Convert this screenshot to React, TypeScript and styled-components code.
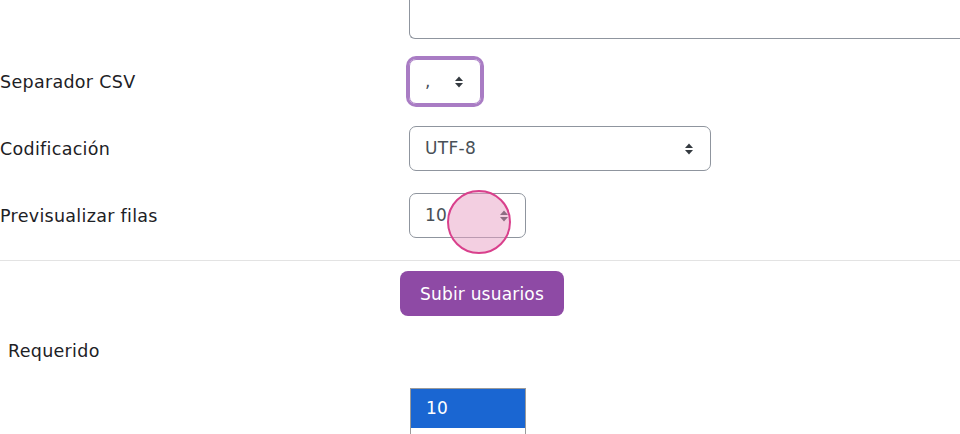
import styled, { createGlobalStyle } from "styled-components";

const GlobalStyle = createGlobalStyle`
  html, body {
    margin: 0;
    padding: 0;
    background: #ffffff;
    overflow: hidden;
  }
  body {
    font-family: "DejaVu Sans", "Liberation Sans", sans-serif;
    color: #1d2125;
    letter-spacing: 0.3px;
    line-height: 1.5;
  }
`;

const Page = styled.div`
  width: 960px;
  height: 434px;
  overflow: hidden;
  position: relative;
`;

const TopArea = styled.div`
  margin-left: 409px;
  margin-top: -40px;
  height: 79px;
  border: 1px solid #8f959e;
  border-right: none;
  border-radius: 6px 0 0 6px;
  box-sizing: border-box;
`;

const FormRows = styled.div`
  display: grid;
  row-gap: 22px;
  margin-top: 20px;
`;

const Row = styled.div`
  display: grid;
  grid-template-columns: 409px 1fr;
  align-items: center;
`;

const Label = styled.label`
  font-size: 17.5px;
  color: #1d2125;
  padding-top: 2px;
`;

const SelectBox = styled.div<{ $width: number; $focused?: boolean }>`
  position: relative;
  width: ${({ $width }) => $width}px;
  height: 45px;
  box-sizing: border-box;
  border: 1px solid ${({ $focused }) => ($focused ? "#a97cc4" : "#8f959e")};
  border-radius: 7px;
  box-shadow: ${({ $focused }) => ($focused ? "0 0 0 3px #a97cc4" : "none")};
  display: flex;
  align-items: center;
  justify-content: space-between;
  padding: 0 16px 0 15px;
  font-size: 17px;
  color: #495057;
`;

const Caret = () => (
  <svg width="10" height="14" viewBox="0 0 10 14">
    <path d="M5 1.5 L9 6 H1 Z" fill="#343a40" />
    <path d="M5 12.5 L9 8 H1 Z" fill="#343a40" />
  </svg>
);

const Divider = styled.hr`
  margin: 22px 0 0;
  border: none;
  border-top: 1px solid #e3e3e3;
`;

const ButtonRow = styled.div`
  display: flex;
  justify-content: center;
  margin-top: 10px;
  padding-left: 4px;
`;

const PrimaryButton = styled.button`
  width: 164px;
  height: 45px;
  border: none;
  border-radius: 8px;
  background: #8e4aa5;
  color: #ffffff;
  font-family: inherit;
  letter-spacing: 0.2px;
  font-size: 17px;
  cursor: pointer;
`;

const RequiredText = styled.div`
  margin: 22px 0 0 8px;
  font-size: 17.5px;
  line-height: 26px;
  color: #1d2125;
`;

const ListBox = styled.div`
  margin: 24px 0 0 410px;
  width: 116px;
  height: 60px;
  box-sizing: border-box;
  border: 1px solid #9a9a9a;
  border-bottom: none;
  background: #ffffff;
`;

const ListOption = styled.div`
  height: 39px;
  display: flex;
  align-items: center;
  padding-left: 15px;
  font-size: 17px;
  background: #1a66d2;
  color: #ffffff;
`;

const ClickMarker = styled.div`
  position: absolute;
  left: 447px;
  top: 190px;
  width: 64px;
  height: 64px;
  box-sizing: border-box;
  border-radius: 50%;
  border: 2px solid #d9408c;
  background: rgba(232, 160, 196, 0.5);
  pointer-events: none;
`;

export default function App() {
  return (
    <Page>
      <GlobalStyle />
      <TopArea />
      <FormRows>
        <Row>
          <Label>Separador CSV</Label>
          <SelectBox $width={72} $focused>
            <span>,</span>
            <Caret />
          </SelectBox>
        </Row>
        <Row>
          <Label>Codificación</Label>
          <SelectBox $width={302}>
            <span>UTF-8</span>
            <Caret />
          </SelectBox>
        </Row>
        <Row>
          <Label>Previsualizar filas</Label>
          <SelectBox $width={117}>
            <span>10</span>
            <Caret />
          </SelectBox>
        </Row>
      </FormRows>
      <Divider />
      <ButtonRow>
        <PrimaryButton type="button">Subir usuarios</PrimaryButton>
      </ButtonRow>
      <RequiredText>Requerido</RequiredText>
      <ListBox>
        <ListOption>10</ListOption>
      </ListBox>
      <ClickMarker />
    </Page>
  );
}
